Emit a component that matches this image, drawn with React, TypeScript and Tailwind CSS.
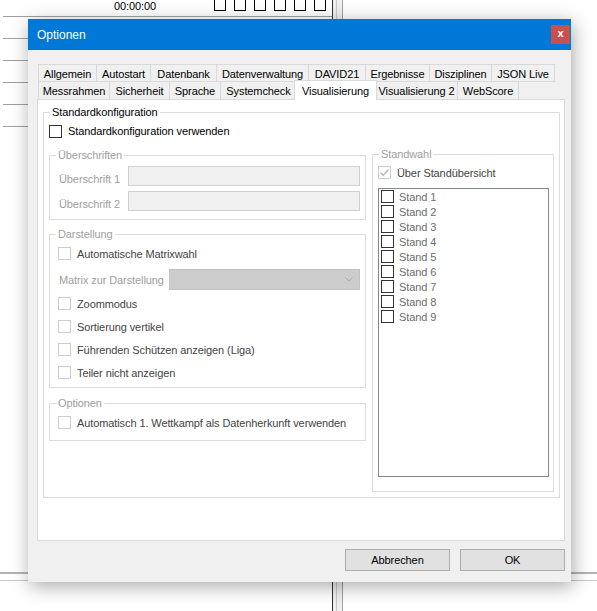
import React from 'react';

const row1 = [
  { label: 'Allgemein', w: 'w-[58px]' },
  { label: 'Autostart', w: 'w-[54px]' },
  { label: 'Datenbank', w: 'w-[66px]' },
  { label: 'Datenverwaltung', w: 'w-[92px]' },
  { label: 'DAVID21', w: 'w-[57px]' },
  { label: 'Ergebnisse', w: 'w-[64px]' },
  { label: 'Disziplinen', w: 'w-[62px]' },
  { label: 'JSON Live', w: 'w-[64px] border-r' },
];

const row2 = [
  { label: 'Messrahmen', w: 'w-[71px]' },
  { label: 'Sicherheit', w: 'w-[60px]' },
  { label: 'Sprache', w: 'w-[51px]' },
  { label: 'Systemcheck', w: 'w-[76px]' },
  { label: 'Visualisierung', w: 'w-[83px]', active: true },
  { label: 'Visualisierung 2', w: 'w-[82px]' },
  { label: 'WebScore', w: 'w-[62px] border-r' },
];

const stands = ['Stand 1', 'Stand 2', 'Stand 3', 'Stand 4', 'Stand 5', 'Stand 6', 'Stand 7', 'Stand 8', 'Stand 9'];

function Box({ disabled, checked }: { disabled?: boolean; checked?: boolean }) {
  return (
    <span
      className={`relative w-[13px] h-[13px] shrink-0 border bg-white ${
        disabled ? 'border-[#cccccc]' : 'border-[#333333]'
      }`}
    >
      {checked && (
        <svg className="absolute left-0 top-0" width="11" height="11" viewBox="0 0 11 11">
          <path d="M1.5 5.5 L4.2 8.2 L9.5 2.5" fill="none" stroke="#b4b4b4" strokeWidth="1.3" />
        </svg>
      )}
    </span>
  );
}

function Check({ label, disabled, checked }: { label: string; disabled?: boolean; checked?: boolean }) {
  return (
    <div className="flex items-center h-[23px] gap-[6px]">
      <Box disabled={disabled} checked={checked} />
      <span className={`pt-[2px] ${disabled ? 'text-[#444444]' : 'text-black'}`}>{label}</span>
    </div>
  );
}

function Group({
  title,
  disabled,
  className,
  children,
}: {
  title: string;
  disabled?: boolean;
  className: string;
  children?: React.ReactNode;
}) {
  return (
    <fieldset className={`border border-[#dcdcdc] ${className}`}>
      <legend className={`ml-[6px] px-[2px] leading-[14px] ${disabled ? 'text-[#a0a0a0]' : 'text-black'}`}>
        {title}
      </legend>
      {children}
    </fieldset>
  );
}

export default function App() {
  return (
    <div className="relative w-[597px] h-[611px] overflow-hidden bg-white text-[11px] tracking-[-0.1px] font-['Liberation_Sans',Arial,sans-serif]">
      {/* Hauptfenster im Hintergrund */}
      <div className="absolute left-[114px] top-[-1px] leading-[14px] text-black">00:00:00</div>
      <div className="absolute left-[214px] top-[-2px] flex gap-[8px]">
        {[0, 1, 2, 3, 4, 5].map((i) => (
          <div key={i} className="w-[12px] h-[13px] border border-black" />
        ))}
      </div>
      <div className="absolute left-[3px] top-[16px] w-[329px] h-px bg-[#a0a0a0]" />
      <div className="absolute left-[3px] top-[38px] w-[100px] h-px bg-[#a0a0a0]" />
      <div className="absolute left-[3px] top-[60px] w-[100px] h-px bg-[#a0a0a0]" />
      <div className="absolute left-[3px] top-[82px] w-[100px] h-px bg-[#a0a0a0]" />
      <div className="absolute left-[3px] top-[104px] w-[100px] h-px bg-[#a0a0a0]" />
      <div className="absolute left-[3px] top-[126px] w-[100px] h-px bg-[#a0a0a0]" />
      <div className="absolute left-[333px] top-0 h-full w-[9px] bg-[#f0f0f0]" />
      <div className="absolute left-[332px] top-0 h-full w-px bg-[#333333]" />
      <div className="absolute left-[336px] top-0 h-full w-px bg-[#c8c8c8]" />
      <div className="absolute left-[342px] top-0 h-full w-px bg-[#a0a0a0]" />
      <div className="absolute left-0 top-[572px] w-full h-[2px] bg-[#b4b4b4]" />
      <div className="absolute left-0 top-[580px] w-full h-px bg-[#c8c8c8]" />

      {/* Dialog */}
      <div className="absolute left-[28px] top-[19px] w-[543px] h-[563px] bg-[#f0f0f0] shadow-[2px_4px_18px_rgba(0,0,0,0.35)]">
        <div className="h-[31px] bg-[#0078d7] flex items-center justify-between pl-[9px]">
          <span className="text-white text-[12px] tracking-normal">Optionen</span>
          <div className="w-[19px] h-[19px] mr-[1px] bg-[#c75050] text-white text-[11px] font-bold leading-none flex items-center justify-center pb-[2px]">
            x
          </div>
        </div>

        <div className="pl-[9px] pr-[6px] pt-[14px]">
          <div className="flex pl-[1px] h-[18px]">
            {row1.map((t) => (
              <div
                key={t.label}
                className={`${t.w} h-[18px] border-t border-l border-b border-[#d9d9d9] bg-[#f0f0f0] flex justify-center pt-[2px] leading-[14px] text-black`}
              >
                {t.label}
              </div>
            ))}
          </div>
          <div className="flex pl-[1px] h-[17px] items-end">
            {row2.map((t) =>
              t.active ? (
                <div
                  key={t.label}
                  className={`${t.w} relative z-10 h-[20px] -mb-px -mx-[2px] border-t border-x border-[#d9d9d9] bg-white flex justify-center pt-[3px] leading-[14px] text-black`}
                >
                  {t.label}
                </div>
              ) : (
                <div
                  key={t.label}
                  className={`${t.w} h-[17px] border-l border-[#d9d9d9] bg-[#f0f0f0] flex justify-center pt-[2px] leading-[14px] text-black`}
                >
                  {t.label}
                </div>
              )
            )}
          </div>

          <div className="relative bg-white border border-[#d9d9d9] w-[528px] h-[442px] pl-[5px] pt-[5px]">
            <Group title="Standardkonfiguration" className="w-[517px] h-[393px]">
              <div className="px-[5px]">
                <div className="flex items-center h-[13px] mt-[6px] gap-[6px]">
                  <Box />
                  <span className="text-black">Standardkonfiguration verwenden</span>
                </div>

                <div className="flex items-start gap-[6px] mt-[9px]">
                  <div className="flex flex-col w-[317px] mt-[1px]">
                    <Group title="Überschriften" disabled className="w-[317px] h-[72px]">
                      <div className="pl-[9px] pr-[5px]">
                        <div className="flex items-center mt-[4px] h-[20px]">
                          <span className="w-[69px] pt-[6px] text-[#a0a0a0]">Überschrift 1</span>
                          <div className="w-[232px] h-[20px] bg-[#f0f0f0] border border-[#d0d0d0]" />
                        </div>
                        <div className="flex items-center mt-[5px] h-[20px]">
                          <span className="w-[69px] pt-[6px] text-[#a0a0a0]">Überschrift 2</span>
                          <div className="w-[232px] h-[20px] bg-[#f0f0f0] border border-[#d0d0d0]" />
                        </div>
                      </div>
                    </Group>

                    <Group title="Darstellung" disabled className="w-[317px] h-[161px] mt-[7px]">
                      <div className="pl-[8px] pr-[5px]">
                        <div className="mt-[1px]">
                          <Check label="Automatische Matrixwahl" disabled />
                        </div>
                        <div className="flex items-center mt-[4px] h-[21px] pl-[1px]">
                          <span className="w-[110px] pt-[1px] text-[#a0a0a0]">Matrix zur Darstellung</span>
                          <div className="w-[191px] h-[21px] bg-[#cccccc] border border-[#c2c2c2] flex items-center justify-end pr-[6px]">
                            <svg width="8" height="5" viewBox="0 0 8 5">
                              <polyline points="0.5,0.5 4,4 7.5,0.5" fill="none" stroke="#a8a8a8" strokeWidth="1" />
                            </svg>
                          </div>
                        </div>
                        <div className="mt-[2px]">
                          <Check label="Zoommodus" disabled />
                          <Check label="Sortierung vertikel" disabled />
                          <Check label="Führenden Schützen anzeigen (Liga)" disabled />
                          <Check label="Teiler nicht anzeigen" disabled />
                        </div>
                      </div>
                    </Group>

                    <Group title="Optionen" disabled className="w-[317px] h-[45px] mt-[8px]">
                      <div className="pl-[8px] mt-[1px]">
                        <Check label="Automatisch 1. Wettkampf als Datenherkunft verwenden" disabled />
                      </div>
                    </Group>
                  </div>

                  <Group title="Standwahl" disabled className="w-[182px] h-[345px]">
                    <div className="pl-[5px]">
                      <Check label="Über Standübersicht" disabled checked />
                      <div className="mt-[4px] w-[171px] h-[289px] border border-[#828790] bg-white pl-[2px]">
                        {stands.map((s) => (
                          <div key={s} className="flex items-center h-[15px] gap-[5px]">
                            <Box />
                            <span className="pt-[2px] text-[#6d6d6d]">{s}</span>
                          </div>
                        ))}
                      </div>
                    </div>
                  </Group>
                </div>
              </div>
            </Group>
          </div>

          <div className="flex justify-end gap-[10px] mt-[8px]">
            <button className="w-[105px] h-[22px] bg-[#e1e1e1] border border-[#adadad] text-black">Abbrechen</button>
            <button className="w-[105px] h-[22px] bg-[#e1e1e1] border border-[#adadad] text-black">OK</button>
          </div>
        </div>
      </div>
    </div>
  );
}
